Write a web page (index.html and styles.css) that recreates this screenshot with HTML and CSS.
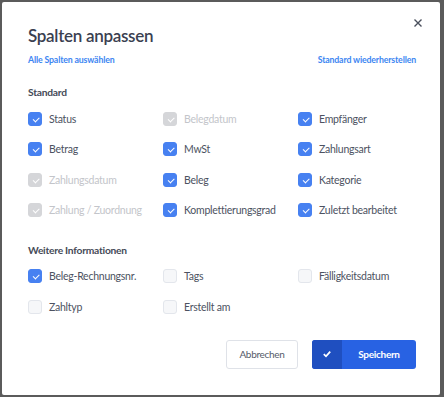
FILE: index.html
```html
<!DOCTYPE html>
<html lang="de">
<head>
    <meta charset="UTF-8">
    <meta name="viewport" content="width=device-width, initial-scale=1.0">
    <title>Spalten anpassen</title>
    <link rel="stylesheet" href="styles.css">
</head>
<body>
    <div class="modal">
        <button class="close-btn" aria-label="Schließen">
            <svg viewBox="0 0 10 10"><path d="M1.5 1.5l7 7M8.5 1.5l-7 7"/></svg>
        </button>

        <h1>Spalten anpassen</h1>

        <div class="links">
            <a href="#">Alle Spalten auswählen</a>
            <a href="#">Standard wiederherstellen</a>
        </div>

        <h2>Standard</h2>
        <div class="grid">
            <label class="opt"><span class="box checked"></span>Status</label>
            <label class="opt disabled"><span class="box checked"></span>Belegdatum</label>
            <label class="opt"><span class="box checked"></span>Empfänger</label>

            <label class="opt"><span class="box checked"></span>Betrag</label>
            <label class="opt"><span class="box checked"></span>MwSt</label>
            <label class="opt"><span class="box checked"></span>Zahlungsart</label>

            <label class="opt disabled"><span class="box checked"></span>Zahlungsdatum</label>
            <label class="opt"><span class="box checked"></span>Beleg</label>
            <label class="opt"><span class="box checked"></span>Kategorie</label>

            <label class="opt disabled"><span class="box checked"></span>Zahlung / Zuordnung</label>
            <label class="opt"><span class="box checked"></span>Komplettierungsgrad</label>
            <label class="opt"><span class="box checked"></span>Zuletzt bearbeitet</label>
        </div>

        <h2 class="second">Weitere Informationen</h2>
        <div class="grid grid-more">
            <label class="opt"><span class="box checked"></span>Beleg-Rechnungsnr.</label>
            <label class="opt"><span class="box"></span>Tags</label>
            <label class="opt"><span class="box"></span>Fälligkeitsdatum</label>

            <label class="opt"><span class="box"></span>Zahltyp</label>
            <label class="opt"><span class="box"></span>Erstellt am</label>
        </div>

        <div class="actions">
            <button class="btn-cancel">Abbrechen</button>
            <button class="btn-save">
                <span class="save-icon">
                    <svg viewBox="0 0 10 10"><path d="M1.8 5.2l2.2 2.1 4.2-4.6"/></svg>
                </span>
                <span class="save-text">Speichern</span>
            </button>
        </div>
    </div>
</body>
</html>
```

FILE: styles.css
```css
* {
    margin: 0;
    padding: 0;
    box-sizing: border-box;
    font-family: 'Lato', sans-serif;
}

body {
    background: #5b5b5b;
    height: 397px;
    padding: 2px 4px 2px 2px;
    overflow: hidden;
}

.modal {
    position: relative;
    background: #fff;
    height: 393px;
    border-radius: 2px;
    padding: 22px 24px 0 26px;
}

.close-btn {
    position: absolute;
    top: 16px;
    right: 17px;
    width: 10px;
    height: 10px;
    border: none;
    background: transparent;
    cursor: pointer;
}

.close-btn svg {
    display: block;
    width: 10px;
    height: 10px;
    stroke: #4a4f5c;
    stroke-width: 1.4;
    fill: none;
}

h1 {
    font-size: 17px;
    letter-spacing: -0.3px;
    line-height: 24px;
    font-weight: 600;
    color: #3a4050;
}

.links {
    display: flex;
    justify-content: space-between;
    margin-top: 5px;
    line-height: 14px;
}

.links a {
    font-size: 8.75px;
    letter-spacing: -0.15px;
    font-weight: 700;
    color: #3d86f2;
    text-decoration: none;
}

h2 {
    margin-top: 17px;
    font-size: 10.25px;
    letter-spacing: -0.25px;
    line-height: 16px;
    font-weight: 700;
    color: #454a57;
}

h2.second {
    margin-top: 25px;
}

.grid {
    display: grid;
    grid-template-columns: 135px 135px 1fr;
    row-gap: 16.3px;
    margin-top: 12px;
}

.grid-more {
    margin-top: 11px;
    row-gap: 17px;
}

.opt {
    display: flex;
    align-items: center;
    gap: 7px;
    height: 14px;
    font-size: 10.5px;
    letter-spacing: -0.25px;
    color: #4c5261;
    white-space: nowrap;
}

.box {
    flex: none;
    position: relative;
    width: 14px;
    height: 14px;
    border-radius: 3px;
    background: #f6f7f9;
    border: 1px solid #e3e6ec;
}

.box.checked {
    background: #4781f1;
    border-color: #4781f1;
}

.box.checked::after {
    content: '';
    position: absolute;
    left: 3.5px;
    top: 4px;
    width: 5px;
    height: 2.5px;
    border-left: 1.5px solid #fff;
    border-bottom: 1.5px solid #fff;
    transform: rotate(-45deg);
}

.opt.disabled {
    color: #c3c5ca;
}

.opt.disabled .box {
    background: #d5d6d9;
    border-color: #d5d6d9;
}

.actions {
    display: flex;
    justify-content: flex-end;
    gap: 14px;
    margin-top: 26px;
}

.btn-cancel {
    width: 72px;
    height: 29px;
    background: #fff;
    border: 1px solid #dfe2e8;
    border-radius: 3px;
    font-size: 10px;
    letter-spacing: -0.3px;
    color: #555b69;
    cursor: pointer;
}

.btn-save {
    display: flex;
    width: 104px;
    height: 29px;
    border: none;
    border-radius: 3px;
    overflow: hidden;
    background: #2862e3;
    color: #fff;
    font-size: 10px;
    letter-spacing: -0.3px;
    font-weight: 700;
    cursor: pointer;
}

.save-icon {
    width: 30px;
    height: 100%;
    background: #1f4fc0;
    display: flex;
    align-items: center;
    justify-content: center;
}

.save-icon svg {
    width: 10px;
    height: 10px;
    fill: none;
    stroke: #fff;
    stroke-width: 1.8;
}

.save-text {
    flex: 1;
    display: flex;
    align-items: center;
    justify-content: center;
}
```
